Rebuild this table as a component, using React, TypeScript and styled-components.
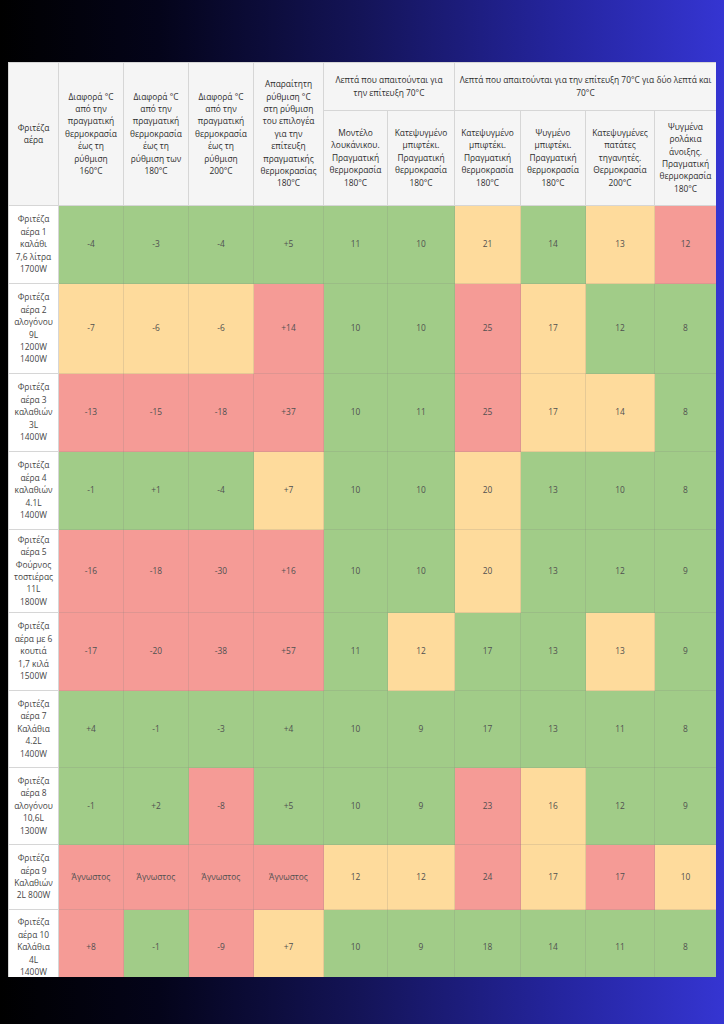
import React from 'react';
import styled, { createGlobalStyle } from 'styled-components';

type Tone = 'g' | 'y' | 'r';

const tones: Record<Tone, string> = {
  g: '#a1cc88',
  y: '#fedb9c',
  r: '#f59b96',
};

const widths = [50, 65, 65, 65, 70, 64, 67, 66, 65, 69, 62];

const subHeads = [
  'Διαφορά °C\nαπό την\nπραγματική\nθερμοκρασία\nέως τη\nρύθμιση\n160°C',
  'Διαφορά °C\nαπό την\nπραγματική\nθερμοκρασία\nέως τη\nρύθμιση των\n180°C',
  'Διαφορά °C\nαπό την\nπραγματική\nθερμοκρασία\nέως τη\nρύθμιση\n200°C',
  'Απαραίτητη\nρύθμιση °C\nστη ρύθμιση\nτου επιλογέα\nγια την\nεπίτευξη\nπραγματικής\nθερμοκρασίας\n180°C',
];

const minuteHeads = [
  'Μοντέλο\nλουκάνικου.\nΠραγματική\nθερμοκρασία\n180°C',
  'Κατεψυγμένο\nμπιφτέκι.\nΠραγματική\nθερμοκρασία\n180°C',
  'Κατεψυγμένο\nμπιφτέκι.\nΠραγματική\nθερμοκρασία\n180°C',
  'Ψυγμένο\nμπιφτέκι.\nΠραγματική\nθερμοκρασία\n180°C',
  'Κατεψυγμένες\nπατάτες\nτηγανητές.\nΘερμοκρασία\n200°C',
  'Ψυγμένα\nρολάκια\nάνοιξης.\nΠραγματική\nθερμοκρασία\n180°C',
];

type Row = { name: string; height: number; cells: [string, Tone][] };

// "value:tone value:tone ..." -> cell list
const parse = (s: string): [string, Tone][] =>
  s.split(' ').map((c) => {
    const [v, t] = c.split(':');
    return [v, t as Tone];
  });

const rows: Row[] = [
  { name: 'Φριτέζα\nαέρα 1\nκαλάθι\n7,6 λίτρα\n1700W', height: 78, cells: parse('-4:g -3:g -4:g +5:g 11:g 10:g 21:y 14:g 13:y 12:r') },
  { name: 'Φριτέζα\nαέρα 2\nαλογόνου\n9L\n1200W\n1400W', height: 90, cells: parse('-7:y -6:y -6:y +14:r 10:g 10:g 25:r 17:y 12:g 8:g') },
  { name: 'Φριτέζα\nαέρα 3\nκαλαθιών\n3L\n1400W', height: 78, cells: parse('-13:r -15:r -18:r +37:r 10:g 11:g 25:r 17:y 14:y 8:g') },
  { name: 'Φριτέζα\nαέρα 4\nκαλαθιών\n4.1L\n1400W', height: 78, cells: parse('-1:g +1:g -4:g +7:y 10:g 10:g 20:y 13:g 10:g 8:g') },
  { name: 'Φριτέζα\nαέρα 5\nΦούρνος\nτοστιέρας\n11L\n1800W', height: 83, cells: parse('-16:r -18:r -30:r +16:r 10:g 10:g 20:y 13:g 12:g 9:g') },
  { name: 'Φριτέζα\nαέρα με 6\nκουτιά\n1,7 κιλά\n1500W', height: 78, cells: parse('-17:r -20:r -38:r +57:r 11:g 12:y 17:g 13:g 13:y 9:g') },
  { name: 'Φριτέζα\nαέρα 7\nΚαλάθια\n4.2L\n1400W', height: 77, cells: parse('+4:g -1:g -3:g +4:g 10:g 9:g 17:g 13:g 11:g 8:g') },
  { name: 'Φριτέζα\nαέρα 8\nαλογόνου\n10,6L\n1300W', height: 77, cells: parse('-1:g +2:g -8:r +5:g 10:g 9:g 23:r 16:y 12:g 9:g') },
  { name: 'Φριτέζα\nαέρα 9\nΚαλαθιών\n2L 800W', height: 65, cells: parse('Άγνωστος:r Άγνωστος:r Άγνωστος:r Άγνωστος:r 12:y 12:y 24:r 17:y 17:r 10:y') },
  { name: 'Φριτέζα\nαέρα 10\nΚαλάθια\n4L\n1400W', height: 76, cells: parse('+8:r -1:g -9:r +7:y 10:g 9:g 18:g 14:g 11:g 8:g') },
];

function App() {
  return (
    <>
      <GlobalStyle />
      <Page>
        <Frame>
          <Table>
            <colgroup>
              {widths.map((w, i) => (
                <Col key={i} $w={w} />
              ))}
            </colgroup>
            <thead>
              <Row $h={48}>
                <HeadCell rowSpan={2}>{'Φριτέζα\nαέρα'}</HeadCell>
                {subHeads.map((t, i) => (
                  <HeadCell key={i} rowSpan={2}>
                    {t}
                  </HeadCell>
                ))}
                <HeadCell colSpan={2}>{'Λεπτά που απαιτούνται για\nτην επίτευξη 70°C'}</HeadCell>
                <HeadCell colSpan={4}>
                  {'Λεπτά που απαιτούνται για την επίτευξη 70°C για δύο λεπτά και\n70°C'}
                </HeadCell>
              </Row>
              <Row $h={95}>
                {minuteHeads.map((t, i) => (
                  <HeadCell key={i}>{t}</HeadCell>
                ))}
              </Row>
            </thead>
            <tbody>
              {rows.map((r, i) => (
                <Row key={i} $h={r.height}>
                  <NameCell>{r.name}</NameCell>
                  {r.cells.map(([v, t], j) => (
                    <ValueCell key={j} $tone={t}>
                      {v}
                    </ValueCell>
                  ))}
                </Row>
              ))}
            </tbody>
          </Table>
        </Frame>
      </Page>
    </>
  );
}

const GlobalStyle = createGlobalStyle`
  html, body {
    margin: 0;
    padding: 0;
  }
  body {
    font-family: 'Open Sans', 'Noto Sans', sans-serif;
  }
`;

const Page = styled.div`
  width: 724px;
  height: 1024px;
  box-sizing: border-box;
  padding: 62px 0 0 8px;
  background: linear-gradient(
    90deg,
    #000000 0%,
    #04041a 22%,
    #141458 50%,
    #2525a0 78%,
    #3535d2 100%
  );
  overflow: hidden;
`;

const Frame = styled.div`
  width: 708px;
  height: 915px;
  overflow: hidden;
  background: #ffffff;
`;

const Table = styled.table`
  width: 708px;
  table-layout: fixed;
  border-collapse: collapse;
  font-size: 8.4px;
  line-height: 12.4px;
  white-space: pre-line;
  text-align: center;
`;

const Col = styled.col<{ $w: number }>`
  width: ${(p) => p.$w}px;
`;

const Row = styled.tr<{ $h: number }>`
  height: ${(p) => p.$h}px;
`;

const HeadCell = styled.th`
  font-weight: 400;
  color: #2e2e2e;
  background: #f5f5f5;
  border: 1px solid #d6d6d6;
  padding: 0 3px;
  vertical-align: middle;
`;

const NameCell = styled.td`
  color: #454545;
  background: #ffffff;
  border: 1px solid #d6d6d6;
  padding: 0 2px;
  vertical-align: middle;
`;

const ValueCell = styled.td<{ $tone: Tone }>`
  color: #505050;
  background: ${(p) => tones[p.$tone]};
  border: 1px solid rgba(120, 120, 120, 0.18);
  padding: 0 2px;
  vertical-align: middle;
`;

export default App;
